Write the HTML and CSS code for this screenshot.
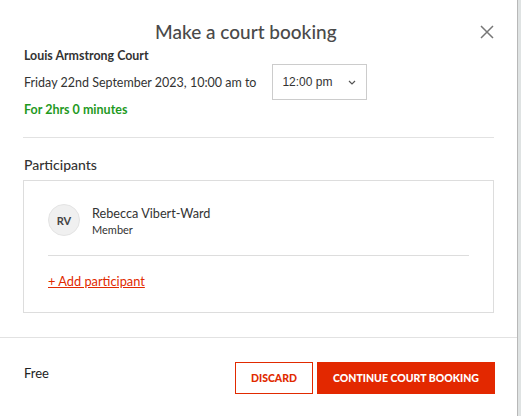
FILE: index.html
```html
<!DOCTYPE html>
<html lang="en">
<head>
    <meta charset="UTF-8">
    <meta name="viewport" content="width=device-width, initial-scale=1.0">
    <title>Make a court booking</title>
    <link rel="stylesheet" href="styles.css">
</head>
<body>
    <div class="modal">
        <!-- Header -->
        <div class="modal-header">
            <h1>Make a court booking</h1>
            <button class="close" aria-label="Close">
                <svg width="14" height="14" viewBox="0 0 14 14">
                    <path d="M1 1 L13 13 M13 1 L1 13" stroke="#777" stroke-width="1.5" fill="none"/>
                </svg>
            </button>
        </div>

        <!-- Booking details -->
        <div class="details">
            <div class="court">Louis Armstrong Court</div>
            <div class="time-row">
                <span>Friday 22nd September 2023, 10:00 am to</span>
                <div class="select">
                    <span>12:00 pm</span>
                    <svg width="8" height="5" viewBox="0 0 8 5">
                        <path d="M1 1 L4 4 L7 1" stroke="#555" stroke-width="1.2" fill="none"/>
                    </svg>
                </div>
            </div>
            <div class="duration">For 2hrs 0 minutes</div>
        </div>

        <!-- Participants -->
        <div class="participants">
            <h2>Participants</h2>
            <div class="participant-box">
                <div class="participant">
                    <div class="avatar">RV</div>
                    <div>
                        <div class="name">Rebecca Vibert-Ward</div>
                        <div class="role">Member</div>
                    </div>
                </div>
                <a href="#" class="add-link">+ Add participant</a>
            </div>
        </div>

        <!-- Footer -->
        <div class="modal-footer">
            <span class="price">Free</span>
            <div class="actions">
                <button class="btn btn-outline">DISCARD</button>
                <button class="btn btn-primary">CONTINUE COURT BOOKING</button>
            </div>
        </div>
    </div>
</body>
</html>
```

FILE: styles.css
```css
/* General Styles */
body {
    margin: 0;
    font-family: Lato, "Noto Sans", sans-serif;
    color: #333;
    background-color: #dfe3e3;
}

.modal {
    width: 518px;
    height: 416px;
    background-color: #fff;
    border-right: 1px solid #b8b8b8;
    box-sizing: border-box;
}

/* Header */
.modal-header {
    display: flex;
    align-items: center;
    padding: 20px 23px 0 155px;
}

.modal-header h1 {
    flex: 1;
    margin: 0;
    font-size: 19px;
    font-weight: 500;
    color: #4a4a4a;
    line-height: 24px;
}

.close {
    background: none;
    border: none;
    padding: 0;
    width: 14px;
    height: 14px;
    cursor: pointer;
    display: flex;
}

/* Details */
.details {
    margin: 0 23px;
    padding-bottom: 20px;
    border-bottom: 1px solid #e2e2e2;
}

.court {
    font-size: 12.4px;
    font-weight: 700;
    color: #333;
    margin-top: 4px;
    padding-left: 1px;
}

.time-row {
    display: flex;
    align-items: center;
    gap: 16px;
    font-size: 12.5px;
    margin-top: 1px;
    padding-left: 1px;
}

.select {
    width: 95px;
    height: 36px;
    box-sizing: border-box;
    border: 1px solid #ccc;
    display: flex;
    align-items: center;
    justify-content: space-between;
    padding: 0 10px 0 9px;
    font-family: "Liberation Sans", Arial, sans-serif;
    font-size: 12px;
    color: #333;
}

.duration {
    font-size: 12.5px;
    font-weight: 700;
    color: #1f9a1f;
    margin-top: 2px;
    padding-left: 1px;
}

/* Participants */
.participants {
    margin: 0 23px;
    padding-top: 18px;
}

.participants h2 {
    margin: 0 0 7px 1px;
    font-size: 14px;
    font-weight: 500;
    color: #333;
}

.participant-box {
    border: 1px solid #ddd;
    padding: 0 24px 23px 24px;
}

.participant {
    display: flex;
    align-items: center;
    gap: 12px;
    padding: 23px 0 19px 0;
    border-bottom: 1px solid #ddd;
}

.avatar {
    width: 30px;
    height: 30px;
    border-radius: 50%;
    background-color: #f0f0f0;
    border: 1px solid #e4e4e4;
    display: flex;
    align-items: center;
    justify-content: center;
    font-size: 11px;
    font-weight: 700;
    color: #444;
}

.name {
    font-size: 12.7px;
    color: #333;
}

.role {
    font-size: 11px;
    color: #333;
    margin-top: 2px;
}

.add-link {
    display: inline-block;
    margin-top: 17px;
    font-size: 12.8px;
    color: #e12a00;
}

/* Footer */
.modal-footer {
    margin-top: 24px;
    border-top: 1px solid #e2e2e2;
    display: flex;
    justify-content: space-between;
    padding: 24px 22px 0 24px;
}

.price {
    font-size: 13px;
    color: #222;
    margin-top: 3px;
}

.actions {
    display: flex;
    gap: 4px;
}

.btn {
    height: 32px;
    font-family: Lato, "Noto Sans", sans-serif;
    font-size: 10.5px;
    font-weight: 900;
    cursor: pointer;
    box-sizing: border-box;
}

.btn-outline {
    width: 78px;
    background-color: #fff;
    color: #e12a00;
    border: 1px solid #e12a00;
}

.btn-primary {
    width: 178px;
    background-color: #e32800;
    color: #fff;
    border: none;
}
```
